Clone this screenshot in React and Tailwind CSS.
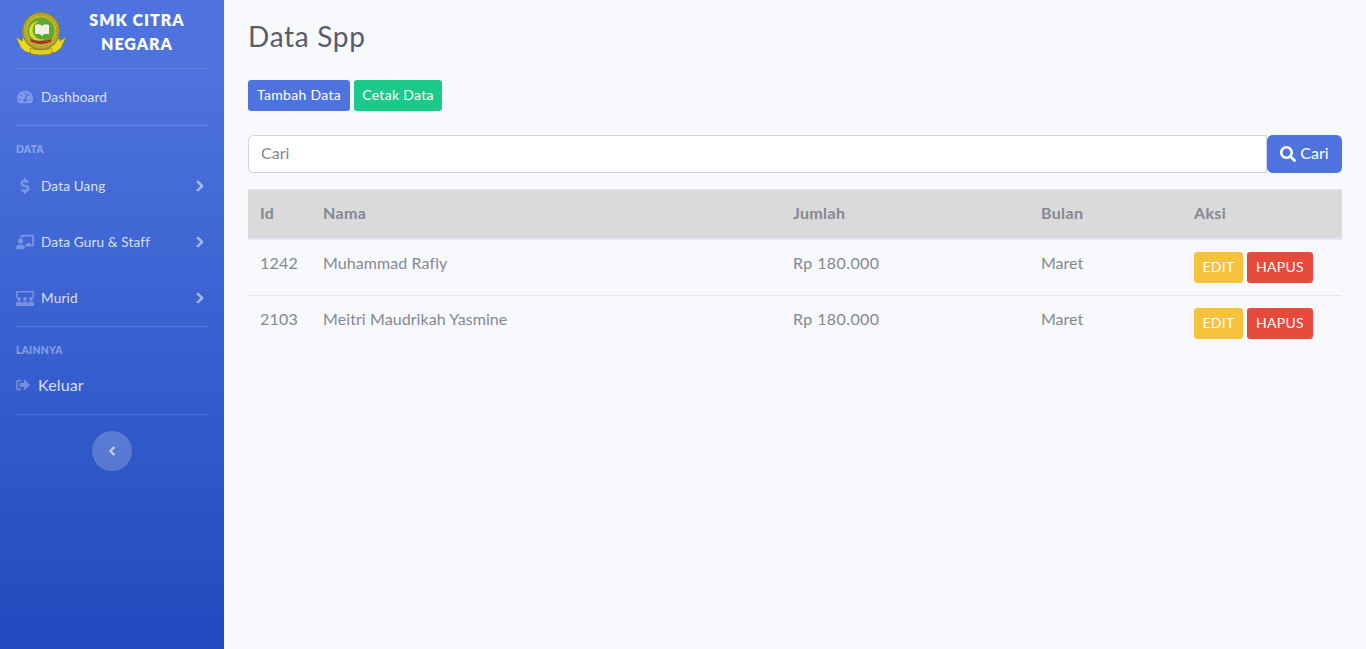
import React from "react";
import { FaTachometerAlt, FaDollarSign, FaChalkboardTeacher, FaChevronLeft, FaSearch, FaChevronRight, FaSignOutAlt } from "react-icons/fa";

const font = { fontFamily: '"Lato", "Open Sans", sans-serif' };

function Logo() {
  return (
    <svg width="50" height="43" viewBox="0 0 50 43" className="shrink-0">
      <path d="M0 25 L6 29 L8 23 L17 35 L17 41 L10 40 L5 36 Z" fill="#e9d81f" stroke="#8d7f1c" strokeWidth="0.5" />
      <path d="M50 25 L44 29 L42 23 L33 35 L33 41 L40 40 L45 36 Z" fill="#e9d81f" stroke="#8d7f1c" strokeWidth="0.5" />
      <circle cx="25" cy="19" r="19" fill="#8f8a2c" />
      <circle cx="25" cy="19" r="17.5" fill="#c7b52a" />
      <circle cx="25" cy="19" r="16" fill="none" stroke="#7c7a2a" strokeWidth="1" strokeDasharray="1.5 1.5" />
      <circle cx="25" cy="19" r="13.5" fill="#5fa92e" />
      <circle cx="23" cy="19" r="10" fill="#e4d92e" />
      <circle cx="26" cy="18" r="9.5" fill="#5fa92e" />
      <path d="M19 13 Q24 11 26 14 Q28 11 33 13 L33 22 Q28 21 26 24 Q24 21 19 22 Z" fill="#f1f1ea" />
      <path d="M14 27 Q25 31 36 27 L35 30 Q25 34 15 30 Z" fill="#b22f28" />
      <path d="M14 36 Q25 40 36 36 L35 42 Q25 44 15 42 Z" fill="#e3d020" stroke="#8d7f1c" strokeWidth="0.5" />
    </svg>
  );
}

function MuridIcon() {
  return (
    <svg width="18" height="15" viewBox="0 0 18 15" fill="currentColor">
      <path d="M1 0 H17 A1 1 0 0 1 18 1 V7 H16.5 V1.5 H1.5 V7 H0 V1 A1 1 0 0 1 1 0 Z" />
      <circle cx="3" cy="8" r="1.9" />
      <circle cx="9" cy="8" r="1.9" />
      <circle cx="15" cy="8" r="1.9" />
      <path d="M0 15 V12.5 A2 2 0 0 1 2 10.5 H4 A2 2 0 0 1 6 12.5 V15 Z" />
      <path d="M6.2 15 V12.5 A2 2 0 0 1 8.2 10.5 H9.8 A2 2 0 0 1 11.8 12.5 V15 Z" />
      <path d="M12 15 V12.5 A2 2 0 0 1 14 10.5 H16 A2 2 0 0 1 18 12.5 V15 Z" />
    </svg>
  );
}

function Divider() {
  return <div className="mx-4 h-px bg-[rgba(255,255,255,0.15)]" />;
}

function Heading({ children }) {
  return <div className="px-4 text-[10.4px] font-black uppercase leading-[16px] tracking-[0.2px] text-[rgba(255,255,255,0.4)]">{children}</div>;
}

function NavItem({ icon, label, arrow }) {
  return (
    <div className="flex h-14 items-center pl-4 pr-[18px] text-[13.6px] text-[rgba(255,255,255,0.8)]">
      <span className="flex w-[25px] shrink-0 justify-center pr-[7px] text-[rgba(255,255,255,0.3)]">{icon}</span>
      <span className="flex-1 tracking-[0.15px]">{label}</span>
      {arrow && <FaChevronRight className="stroke-current stroke-[30] text-[12px] text-[rgba(255,255,255,0.5)]" />}
    </div>
  );
}

function Sidebar() {
  return (
    <aside className="flex w-[224px] shrink-0 flex-col bg-gradient-to-b from-[#4e73df] from-10% to-[#224abe]">
      <div className="flex h-[68px] items-start pl-4 pr-[16px] pt-[8px]">
        <div className="pt-[4px]"><Logo /></div>
        <div className="flex-1 text-center text-[16px] font-extrabold leading-[24px] tracking-[1px] text-white">
          SMK CITRA<br />NEGARA
        </div>
      </div>
      <Divider />
      <NavItem icon={<FaTachometerAlt className="text-[16px]" />} label="Dashboard" />
      <Divider />
      <div className="h-[15px]" />
      <Heading>Data</Heading>
      <div className="h-[1px]" />
      <NavItem icon={<FaDollarSign className="text-[16px]" />} label="Data Uang" arrow />
      <NavItem icon={<FaChalkboardTeacher className="text-[18px]" />} label="Data Guru & Staff" arrow />
      <NavItem icon={<MuridIcon />} label="Murid" arrow />
      <Divider />
      <div className="h-[15px]" />
      <Heading>Lainnya</Heading>
      <div className="flex h-14 items-center pb-[2px] pl-4 text-[16px] text-[rgba(255,255,255,0.8)]">
        <FaSignOutAlt className="mr-[8px] text-[14px] text-[rgba(255,255,255,0.3)]" />
        <span className="tracking-[0.15px]">Keluar</span>
      </div>
      <Divider />
      <div className="flex justify-center pt-4">
        <div className="flex h-10 w-10 items-center justify-center rounded-full bg-[rgba(255,255,255,0.2)]">
          <FaChevronLeft className="stroke-current stroke-[40] text-[10px] text-[rgba(255,255,255,0.6)]" />
        </div>
      </div>
    </aside>
  );
}

function Btn({ className, children }) {
  return <span className={"inline-flex h-[31px] items-center justify-center rounded-[3.2px] pb-[2px] text-[14px] tracking-[0.3px] text-white " + className}>{children}</span>;
}

const rows = [
  ["1242", "Muhammad Rafly", "Rp 180.000", "Maret"],
  ["2103", "Meitri Maudrikah Yasmine", "Rp 180.000", "Maret"],
];

const thClass = "h-[51px] border-t border-b-2 border-[#e3e6f0] bg-[#dadada] px-3 pb-[2px] font-bold tracking-[0.35px]";

function DataTable() {
  return (
    <table className="mt-[16px] w-full table-fixed border-separate border-spacing-0 text-[16px] text-[#858796]">
      <colgroup>
        <col className="w-[63px]" />
        <col className="w-[470px]" />
        <col className="w-[248px]" />
        <col className="w-[153px]" />
        <col />
      </colgroup>
      <thead>
        <tr className="text-left">
          <th className={thClass}>Id</th>
          <th className={thClass}>Nama</th>
          <th className={thClass}>Jumlah</th>
          <th className={thClass}>Bulan</th>
          <th className={thClass}>Aksi</th>
        </tr>
      </thead>
      <tbody>
        {rows.map((r, i) => {
          const rowBorder = i === 0 ? "border-b border-[#e3e6f0] pb-[9px]" : "pb-[11px]";
          return (
            <tr key={r[0]}>
              <td className={"h-[56px] px-3 tracking-[0.2px] " + rowBorder}>{r[0]}</td>
              <td className={"px-3 tracking-[0.08px] " + rowBorder}>{r[1]}</td>
              <td className={"px-3 tracking-[0.4px] " + rowBorder}>{r[2]}</td>
              <td className={"px-3 " + rowBorder}>{r[3]}</td>
              <td className={"px-3 pt-3 align-top " + (i === 0 ? "border-b border-[#e3e6f0]" : "")}>
                <div className="flex gap-1">
                  <Btn className="w-[49px] bg-[#f6c23e]">EDIT</Btn>
                  <Btn className="w-[66px] bg-[#e74a3b]">HAPUS</Btn>
                </div>
              </td>
            </tr>
          );
        })}
      </tbody>
    </table>
  );
}

export default function App() {
  return (
    <div className="flex min-h-[649px] bg-[#f8f9fc]" style={font}>
      <Sidebar />
      <main className="flex-1 px-6">
        <h1 className="pt-[16px] text-[28px] font-normal leading-[40px] tracking-[0.7px] text-[#5a5c69]">Data Spp</h1>
        <div className="mt-[24px] flex gap-1">
          <Btn className="w-[102px] bg-[#4e73df]">Tambah Data</Btn>
          <Btn className="w-[88px] bg-[#1cc88a]">Cetak Data</Btn>
        </div>
        <div className="mt-6 flex h-[38px]">
          <div className="flex flex-1 items-center rounded-l-[5.6px] border border-[#d1d3e2] bg-white px-3 pb-[2px] text-[16px] text-[#858796]">Cari</div>
          <div className="flex w-[75px] items-center justify-center gap-[4px] rounded-[5.6px] bg-[#4e73df] text-[16px] text-white">
            <FaSearch className="text-[16px]" />
            <span className="pb-[2px]">Cari</span>
          </div>
        </div>
        <DataTable />
      </main>
    </div>
  );
}
